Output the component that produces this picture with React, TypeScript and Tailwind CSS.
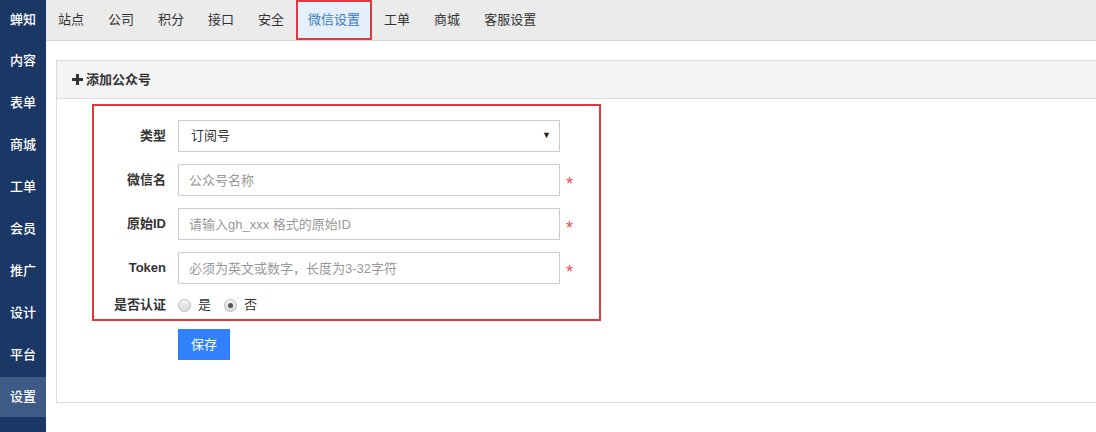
import { useState } from 'react'

const sideItems = ['蝉知', '内容', '表单', '商城', '工单', '会员', '推广', '设计', '平台', '设置']
const tabs = ['站点', '公司', '积分', '接口', '安全', '微信设置', '工单', '商城', '客服设置']

function Field({ label, placeholder }: { label: string; placeholder: string }) {
  return (
    <div className="flex items-center">
      <label className="w-[72px] text-right font-bold text-[#333]">{label}</label>
      <input
        className="ml-3 h-8 w-[382px] border border-[#ccc] px-[10px] text-[13px] text-[#333] outline-none placeholder:text-[#999]"
        placeholder={placeholder}
      />
      <span className="ml-[6px] mt-[7px] text-[18px] leading-none text-[#e5504f]">*</span>
    </div>
  )
}

export default function App() {
  const [verified, setVerified] = useState(false)

  return (
    <div className="flex h-[432px] w-[1096px] overflow-hidden bg-white font-['Liberation_Sans','Noto_Sans_CJK_SC',sans-serif] text-[13px] text-[#333]">
      <aside className="flex w-[46px] shrink-0 flex-col gap-[2px] bg-[#1b3766]">
        {sideItems.map((item, i) => (
          <div
            key={item}
            className={
              'flex items-center justify-center text-[13px] font-medium ' +
              (i === 0 ? 'h-[39px] text-white ' : 'h-[40px] text-white ') +
              (i === 9 ? 'bg-[#3e5b88] text-[#d5dce8]' : '')
            }
          >
            {item}
          </div>
        ))}
      </aside>

      <main className="flex-1">
        <nav className="flex h-[41px] border-b border-[#d5d5d5] bg-[#ebebeb]">
          {tabs.map((tab, i) =>
            i === 5 ? (
              <div key={tab} className="flex h-[40px] items-center border-2 border-[#e0383c] bg-[#e6f0fa] px-[10px] text-[#3a7bc8]">
                {tab}
              </div>
            ) : (
              <div key={tab} className="flex h-[40px] items-center px-3 text-[#333]">
                {tab}
              </div>
            )
          )}
        </nav>

        <div className="ml-[10px] mt-[19px] w-[1060px] border border-[#ddd]">
          <div className="flex h-[38px] items-center gap-[3px] border-b border-[#ddd] bg-[#f4f4f4] px-[15px] font-bold">
            <svg width="11" height="11" viewBox="0 0 11 11">
              <rect x="4" y="0" width="3" height="11" fill="#333" />
              <rect x="0" y="4" width="11" height="3" fill="#333" />
            </svg>
            添加公众号
          </div>

          <div className="pb-[42px] pl-[35px] pt-[5px]">
            <div className="flex w-[509px] flex-col gap-3 border-2 border-[#e0383c] pb-[3px] pt-[14px]">
              <div className="flex items-center">
                <label className="w-[72px] text-right font-bold">类型</label>
                <div className="ml-3 flex h-8 w-[382px] items-center justify-between border border-[#ccc] pl-[12px] pr-[8px]">
                  <span>订阅号</span>
                  <span className="text-[9px] text-[#222]">▼</span>
                </div>
              </div>
              <Field label="微信名" placeholder="公众号名称" />
              <Field label="原始ID" placeholder="请输入gh_xxx 格式的原始ID" />
              <Field label="Token" placeholder="必须为英文或数字，长度为3-32字符" />
              <div className="-mt-[2px] flex h-[22px] items-center">
                <label className="w-[72px] text-right font-bold">是否认证</label>
                <button className="ml-3 flex items-center gap-[7px]" onClick={() => setVerified(true)}>
                  <span className="flex h-[13px] w-[13px] items-center justify-center rounded-full border border-[#bbb] bg-gradient-to-b from-[#f4f4f4] to-[#d8d8d8]">
                    {verified && <span className="h-[5px] w-[5px] rounded-full bg-[#555]" />}
                  </span>
                  是
                </button>
                <button className="ml-[13px] flex items-center gap-[7px]" onClick={() => setVerified(false)}>
                  <span className="flex h-[13px] w-[13px] items-center justify-center rounded-full border border-[#bbb] bg-gradient-to-b from-[#f4f4f4] to-[#d8d8d8]">
                    {!verified && <span className="h-[5px] w-[5px] rounded-full bg-[#555]" />}
                  </span>
                  否
                </button>
              </div>
            </div>
            <button className="ml-[86px] mt-[8px] h-[31px] w-[52px] bg-[#3280fc] text-white">保存</button>
          </div>
        </div>
      </main>
    </div>
  )
}
